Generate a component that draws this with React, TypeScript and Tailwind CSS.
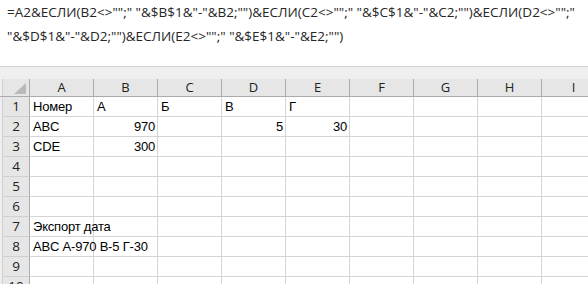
import React from "react";

type Cell = { text: string; align?: "left" | "right" };

const columns = ["A", "B", "C", "D", "E", "F", "G", "H", "I"];

const data: Record<number, Record<string, Cell>> = {
  1: { A: { text: "Номер" }, B: { text: "А" }, C: { text: "Б" }, D: { text: "В" }, E: { text: "Г" } },
  2: { A: { text: "ABC" }, B: { text: "970", align: "right" }, D: { text: "5", align: "right" }, E: { text: "30", align: "right" } },
  3: { A: { text: "CDE" }, B: { text: "300", align: "right" } },
  7: { A: { text: "Экспорт дата" } },
  8: { A: { text: "ABC А-970 В-5 Г-30" } },
};

const formulaLines = [
  '=A2&ЕСЛИ(B2<>"";" "&$B$1&"-"&B2;"")&ЕСЛИ(C2<>"";" "&$C$1&"-"&C2;"")&ЕСЛИ(D2<>"";"',
  '"&$D$1&"-"&D2;"")&ЕСЛИ(E2<>"";" "&$E$1&"-"&E2;"")',
];

const rows = [1, 2, 3, 4, 5, 6, 7, 8, 9, 10];

export default function App() {
  return (
    <div
      className="w-[588px] h-[284px] overflow-hidden bg-white text-[#222]"
      style={{ fontFamily: '"Open Sans", "Noto Sans", sans-serif' }}
    >
      {/* formula bar */}
      <div className="h-[67px] border-b border-[#d4d4d4] px-[7px] text-[13.5px] leading-[24px] text-[#262626]">
        {formulaLines.map((line, i) => (
          <div key={i} className="whitespace-nowrap">
            {line}
          </div>
        ))}
      </div>

      {/* gap band */}
      <div className="h-[12px] bg-[#efefef]" />

      {/* column headers */}
      <div className="flex h-[18px] bg-[#e6e6e6] border-b border-[#ababab]">
        <div className="w-[3px] shrink-0 bg-[#efefef] border-r border-[#d0d0d0]" />
        <div className="relative w-[27px] shrink-0 border-r border-[#ababab]">
          <svg className="absolute left-[11px] top-[4px]" width="12" height="11" viewBox="0 0 12 11">
            <polygon points="12,0 12,11 0,11" fill="#b9b9b9" />
          </svg>
        </div>
        {columns.map((c) => (
          <div
            key={c}
            className="w-[64px] shrink-0 border-r border-[#ababab] flex items-center justify-center text-[13px] leading-none text-[#222]"
          >
            {c}
          </div>
        ))}
      </div>

      {/* rows */}
      {rows.map((r) => (
        <div key={r} className="flex h-[20px]">
          <div className="w-[3px] shrink-0 bg-[#efefef] border-r border-[#d0d0d0]" />
          <div className="w-[27px] shrink-0 bg-[#e6e6e6] border-r border-b border-r-[#ababab] border-b-[#d0d0d0] flex items-center justify-center text-[13.5px] leading-none text-[#222]">
            {r}
          </div>
          {columns.map((c) => {
            const cell = data[r]?.[c];
            return (
              <div
                key={c}
                className={
                  "w-[64px] shrink-0 border-r border-b border-[#d4d4d4] flex items-end pb-[1px] text-[13px] tracking-[-0.2px] leading-[17px] text-black whitespace-nowrap overflow-visible " +
                  (cell?.align === "right" ? "justify-end pr-[2px]" : "justify-start pl-[3px]")
                }
                style={{ fontFamily: '"Liberation Sans", Arial, sans-serif' }}
              >
                {cell?.text}
              </div>
            );
          })}
        </div>
      ))}
    </div>
  );
}
